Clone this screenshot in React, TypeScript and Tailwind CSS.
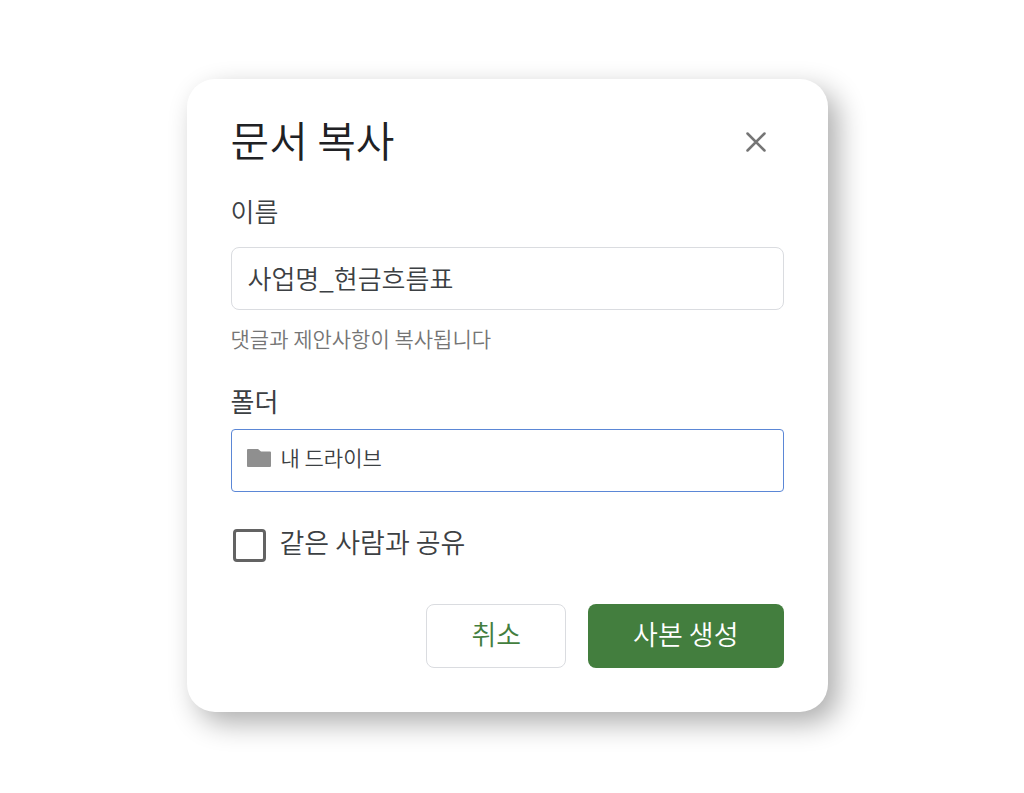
import React, { useState } from 'react';

export default function App() {
  const [name, setName] = useState('사업명_현금흐름표');
  const [share, setShare] = useState(false);

  return (
    <main className="min-h-screen bg-white flex items-center justify-center pr-2.5 pb-0.5 font-['Noto_Sans_CJK_KR',sans-serif] text-[#3c4043]">
      <form
        role="dialog"
        aria-labelledby="copy-title"
        onSubmit={e => e.preventDefault()}
        className="w-full max-w-[641px] bg-white rounded-[28px] px-11 pt-9 pb-11 shadow-[10px_11px_28px_rgba(0,0,0,0.32)]"
      >
        <div className="flex items-center justify-between pr-4">
          <h1 id="copy-title" className="text-[42px] leading-12 text-[#202124] font-[350]">문서 복사</h1>
          <button type="button" aria-label="닫기" className="mt-1 text-[#757575]">
            <svg width="24" height="24" viewBox="0 0 24 24" fill="none" stroke="currentColor" strokeWidth="2.5" strokeLinecap="round">
              <path d="M3.5 4.5L20.5 21.5M20.5 4.5L3.5 21.5" />
            </svg>
          </button>
        </div>

        <label htmlFor="doc-name" className="block mt-8 text-[26px] leading-8 font-[350]">이름</label>
        <input
          id="doc-name"
          type="text"
          value={name}
          onChange={e => setName(e.target.value)}
          className="w-full h-[63px] mt-5 px-4 pb-0.5 border border-[#dadce0] rounded-lg text-[26px] font-[350] focus:outline-none"
        />
        <p className="mt-3.5 text-[21px] leading-7 text-[#757575] font-[350]">댓글과 제안사항이 복사됩니다</p>

        <p id="folder-label" className="mt-[33px] text-[26px] leading-8">폴더</p>
        <button
          type="button"
          aria-labelledby="folder-label folder-value"
          className="w-full h-[63px] mt-3 px-[15px] pb-1.5 flex items-center gap-2.5 border border-[#5b87d6] rounded text-[21px] font-[350]"
        >
          <svg width="24" height="18" viewBox="0 0 24 18" fill="#8f8f8f" aria-hidden="true">
            <path d="M1 0H11L14 2.5H23Q24 2.5 24 3.5V17Q24 18 23 18H1Q0 18 0 17V1Q0 0 1 0Z" />
          </svg>
          <span id="folder-value">내 드라이브</span>
        </button>

        <label className="mt-[34px] ml-0.5 flex items-center gap-3.5 text-[27px] leading-8 font-[350]">
          <input
            type="checkbox"
            checked={share}
            onChange={e => setShare(e.target.checked)}
            className="appearance-none w-[33px] h-[33px] border-3 border-[#636363] rounded checked:bg-[#437e3e]"
          />
          <span className="pb-1.5">같은 사람과 공유</span>
        </label>

        <div className="mt-10 flex justify-end gap-[22px] text-[27px] leading-8 font-[350]">
          <button type="button" className="h-16 px-11 pb-1 border border-[#dadce0] rounded-lg text-[#437e3e]">취소</button>
          <button type="submit" className="h-16 px-[45px] pb-1 bg-[#437e3e] rounded-lg text-white">사본 생성</button>
        </div>
      </form>
    </main>
  );
}
